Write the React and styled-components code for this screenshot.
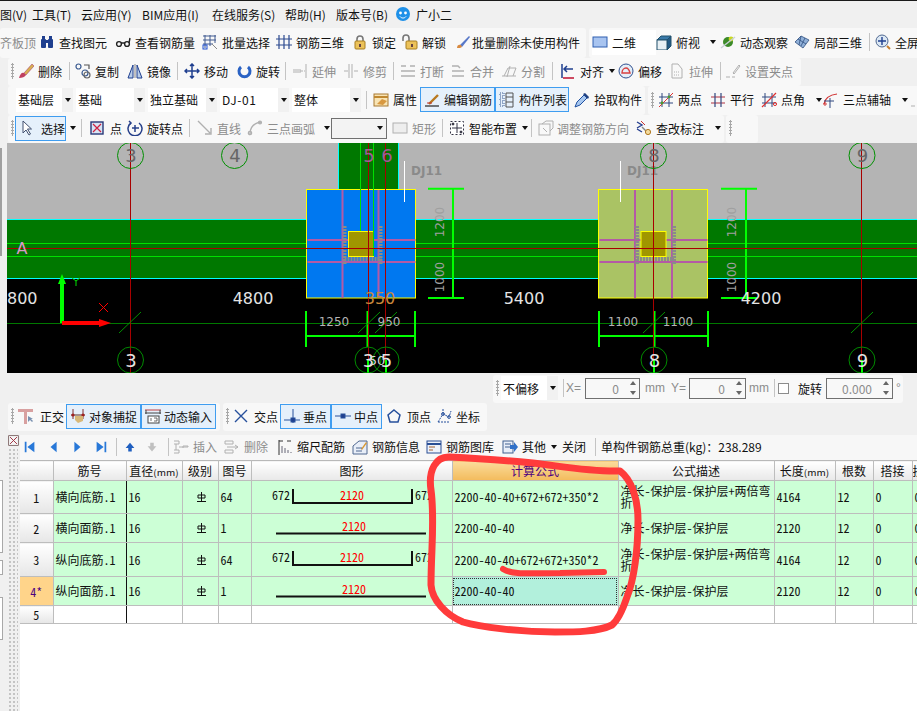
import React from 'react';
import styled, { createGlobalStyle } from 'styled-components';

const GlobalStyle = createGlobalStyle`
  html, body { margin: 0; padding: 0; background: #f0f0f0; overflow: hidden; }
  body { width: 917px; height: 711px; font: 12px "Noto Sans CJK SC", "Liberation Sans", sans-serif; color: #111; }
`;

const MONO = '"Noto Sans Mono CJK SC", "Liberation Mono", "Noto Sans CJK SC", monospace';

const navy = '#1f3f8f';
const mute = '#b0b0b0';
const icons = {
  find: <g fill={navy}><rect x="2" y="5" width="5" height="9" rx="1" /><rect x="9" y="5" width="5" height="9" rx="1" /><rect x="3" y="2" width="3" height="4" /><rect x="10" y="2" width="3" height="4" /><rect x="6" y="6" width="4" height="3" /></g>,
  glasses: <g fill="none" stroke="#222" strokeWidth="1.4"><circle cx="4" cy="10" r="2.4" /><circle cx="12" cy="10" r="2.4" /><path d="M6 9h4M14 9l1-5" /></g>,
  batch: <g fill="none" stroke="#405a90"><path d="M1 2h13M1 6h13M1 10h10M3 1v13M8 1v11M13 1v8" /><rect x="1" y="11" width="4" height="4" stroke="#2050d0" /><path d="M10 10l5 5" stroke="#888" /></g>,
  rebar: <g fill="none" stroke="#2c4a90" strokeWidth="1.2"><path d="M0 5h16M0 11h16M3 1v14M8 1v14M13 1v14" /></g>,
  lock: <g><path d="M5 8V5a3 3 0 0 1 6 0v3" fill="none" stroke="#777" strokeWidth="1.6" /><rect x="3" y="7" width="10" height="8" rx="1" fill="#ecc25a" stroke="#a87f20" /><rect x="7" y="10" width="2" height="3" fill="#644" /></g>,
  unlock: <g><path d="M1 7V4a3 3 0 0 1 6 0v3" fill="none" stroke="#777" strokeWidth="1.6" /><rect x="4" y="7" width="11" height="8" rx="1" fill="#ecc25a" stroke="#a87f20" /><rect x="9" y="10" width="2" height="3" fill="#644" /></g>,
  brush: <g><path d="M5 11L14 2l1 1-8 10z" fill="#5878c8" /><path d="M2 14c0-3 2-4 4-3l1 2c-1 1-3 1-5 1z" fill="#d88a40" /></g>,
  erase: <g><path d="M6 10L14 1l2 2-8 9z" fill="#d8b050" stroke="#805" strokeWidth=".4" /><path d="M1 15c1-4 3-6 5-5l2 2c-1 2-4 3-7 3z" fill="#c04060" /></g>,
  view2d: <rect x="1" y="3" width="14" height="10" fill="#a8c4f0" stroke="#2f5fb0" />,
  cube: <g stroke="#20506c" strokeWidth="1"><path d="M1 6l4-4h10l-4 4z" fill="#3878a8" /><path d="M11 6l4-4v10l-4 4z" fill="#245a84" /><rect x="1" y="6" width="10" height="10" fill="#e8f0f4" /></g>,
  orbit: <g><circle cx="8" cy="8" r="5" fill="#3c8a28" /><circle cx="11" cy="5" r="2.4" fill="#c8d820" /><path d="M1 14L15 3" stroke="#c8d0d8" strokeWidth="1.4" /></g>,
  local3d: <g fill="#90b0d8" stroke="#305080" strokeWidth=".8"><path d="M1 8l6-6 8 4-6 8z" /><path d="M4 5l8 5M7 2l-2 9M11 4l-4 8" fill="none" /></g>,
  fit: <g fill="none"><circle cx="7" cy="7" r="6" fill="#dce8f4" stroke="#506890" /><path d="M7 3v8M3 7h8" stroke="#1f3f8f" strokeWidth="1.4" /><path d="M12 12l3 3" stroke="#c88030" strokeWidth="2" /></g>,
  copy: <g fill="none" stroke="#3a5a90" strokeWidth="1.2"><circle cx="3.5" cy="3.5" r="2.5" /><circle cx="10" cy="10" r="3" /><circle cx="12" cy="12" r="3" stroke="#666" /><path d="M9 2h5v4" stroke="#555" /></g>,
  mirror: <g fill="#b8cce8" stroke={navy}><path d="M1 15L6 2v13zM15 15L10 2v13z" /><path d="M8 1v14" stroke="#888" /></g>,
  move: <g fill="none" stroke={navy} strokeWidth="1.5"><path d="M8 1v14M1 8h14M6 3l2-2 2 2M6 13l2 2 2-2M3 6L1 8l2 2M13 6l2 2-2 2" /></g>,
  rotate: <path d="M12 4a5.5 5.5 0 1 1-7 0" fill="none" stroke="#2a62c4" strokeWidth="3" />,
  extend: <g fill="none" stroke={mute}><path d="M14 1v14M1 7h8v2H1" /><path d="M10 8h3" strokeDasharray="1 1" /></g>,
  trim: <g fill="none" stroke={mute}><path d="M6 1v14M9 1v14M1 8h4M11 8h4" /></g>,
  breakI: <g fill="none" stroke={mute} strokeWidth="1.4"><path d="M1 3h5M10 3h5M1 8h14M1 13h14" /></g>,
  merge: <g fill="none" stroke={mute} strokeWidth="1.4"><path d="M2 3h6l2 2M2 8h12M2 13h12" /></g>,
  split: <g fill="none" stroke={mute}><path d="M1 13h14M3 13l4-8h8l-3 8M9 3l-3 11" /></g>,
  align: <g fill="none" strokeWidth="1.5"><path d="M2 1v14" stroke="#1f3f8f" /><path d="M3 15h11" stroke="#c01030" /><path d="M5 6h8M7 3L4 6l3 3" stroke="#1f3f8f" /></g>,
  offset: <g><circle cx="8" cy="8" r="7" fill="#e4eef8" stroke="#305090" /><path d="M4 10c0-3 2-5 4-5s3 1 4 5z" fill="none" stroke="#d84040" strokeWidth="1.4" /></g>,
  stretch: <g fill="none" stroke={mute}><path d="M3 15V1h6l4 5v9z" /><path d="M5 9h6M5 12h6" strokeDasharray="1 1" /></g>,
  grips: <g fill="none" stroke={mute}><path d="M1 14h4M7 14h3M8 10l6-8 1 1-6 8z" /></g>,
  attr: <g><rect x="1" y="2" width="14" height="12" fill="#f8e4b4" stroke="#a87830" /><path d="M1 5h14" stroke="#c08830" strokeWidth="2" /><path d="M4 12l5-5 5 2-4 4z" fill="#d89840" /></g>,
  edit: <g fill="none"><path d="M1 14h14" stroke="#222" strokeWidth="1.2" /><path d="M5 12L14 3" stroke="#b87820" strokeWidth="2.4" /><path d="M3 11h5" stroke="#c03030" /></g>,
  list: <g fill="none" stroke="#3a5a90"><rect x="1" y="1" width="4" height="3" strokeDasharray="1 1" /><rect x="1" y="6" width="4" height="3" strokeDasharray="1 1" /><rect x="1" y="11" width="4" height="3" strokeDasharray="1 1" /><path d="M7 1h7v14H7zM7 5h7M7 10h7" stroke="#555" /></g>,
  pick: <g><path d="M1 15l2-5 7-7 3 3-7 7z" fill="#a8c8f0" stroke="#2050a0" /><path d="M9 2l2-1 4 4-1 2z" fill="#204080" /></g>,
  twopt: <g stroke="#304880" fill="none"><path d="M4 1v14M11 1v14M1 5h14M1 11h14" /><path d="M1 15L15 1" stroke="#e03030" /><circle cx="4" cy="11" r="1.4" fill="#4a9a30" stroke="none" /><circle cx="11" cy="5" r="1.4" fill="#4a9a30" stroke="none" /></g>,
  parallel: <g fill="none" strokeWidth="1.2"><path d="M1 5h14M1 11h14" stroke="#b03040" /><path d="M5 1v14M11 1v14" stroke="#304880" /></g>,
  angle: <g fill="none" stroke="#304880"><path d="M4 1v14M11 1v14M1 5h14M1 11h14" /><path d="M1 15L15 1" stroke="#e03030" strokeWidth="1.2" /><circle cx="14" cy="12" r="1.6" stroke="#e03030" /></g>,
  arc3: <g fill="none"><path d="M1 12C2 6 6 3 14 2" stroke="#d03030" strokeWidth="1.2" /><path d="M7 6v10M1 9h10" stroke="#304880" /><circle cx="2" cy="12" r="1.2" stroke="#d03030" /></g>,
  cursor: <path d="M4 1v12l3-3 3 5 1.5-1-3-5h4z" fill="#fff" stroke="#405070" />,
  point: <g><rect x="2" y="2" width="12" height="12" fill="#d8e4f4" stroke="#283878" strokeWidth="1.4" /><path d="M4 4l8 8M12 4l-8 8" stroke="#d02040" strokeWidth="1.2" /></g>,
  rotpt: <g fill="none" stroke="#27408a" strokeWidth="1.5"><path d="M12 3a7 7 0 1 1-8 0" /><path d="M8 5v7M5 8h7" /><path d="M2 1l2 2-2 2" /></g>,
  line: <g stroke={mute} fill="none" strokeWidth="1.4"><path d="M1 1l12 12M14 8v6H8" /></g>,
  arc: <g fill="none" stroke={mute} strokeWidth="1.4"><path d="M3 14C3 7 7 3 14 2" /><circle cx="3" cy="13" r="1.6" /><circle cx="13" cy="2.5" r="1.4" /></g>,
  rect: <rect x="1" y="3" width="14" height="10" fill="#eee" stroke={mute} />,
  smart: <g stroke="#334"><rect x="1.5" y="1.5" width="13" height="13" fill="#fff" strokeDasharray="2 2" /><path d="M8 3v10M3 8h10" fill="none" /><circle cx="4" cy="4" r="1" fill="#222" /><circle cx="12" cy="12" r="1" fill="#222" /></g>,
  adjust: <g fill="none" stroke={mute}><rect x="1" y="4" width="11" height="11" /><path d="M4 4l4-3h7v7l-3 3M5 8l4 4" /></g>,
  mark: <g fill="none"><path d="M1 2l5 3-5 3M1 9l5 3" stroke="#274090" strokeWidth="1.4" /><path d="M6 7l5 5" stroke="#888" strokeWidth="1.4" /><circle cx="12" cy="12" r="2.6" fill="#f4dca0" stroke="#b07820" /><path d="M5 1l4 4" stroke="#c83030" /></g>,
  ortho: <g><path d="M0 1h15v3H9v12H6V4H0z" fill="#d8a0a0" /><path d="M10 8v6l2-2 2 2 1-1-2-2h2z" fill="#7890b0" /></g>,
  snap: <g><path d="M1 7h14" stroke="#603020" /><path d="M3 1v10M13 1v10" stroke="#803030" /><circle cx="3" cy="7" r="1.6" fill="#a02020" /><circle cx="13" cy="7" r="1.6" fill="#a02020" /><path d="M5 8h8v5l-5 2-3-3z" fill="#d8b878" /></g>,
  dyn: <g fill="none" stroke="#444"><path d="M0 2h16" stroke="#c04040" /><path d="M1 2v4M15 2v4M0 5h16" /><rect x="3" y="8" width="11" height="7" fill="#fff" /><path d="M6 10v3M9 10h3v3H9" strokeWidth=".8" /></g>,
  cross: <path d="M2 2l12 12M14 2L2 14" stroke="#27509c" strokeWidth="1.4" />,
  perp: <g fill="#1f3f8f" stroke="#27509c"><path d="M0 12h16M9 1v14" fill="none" /><rect x="7" y="10" width="4" height="4" /></g>,
  mid: <g fill="#1f3f8f" stroke="#27509c"><path d="M0 8h16" fill="none" /><rect x="6" y="6" width="4" height="4" /></g>,
  vertex: <path d="M8 2l6 5-2 7H4L2 7z" fill="none" stroke="#27509c" strokeWidth="1.5" />,
  coord: <g fill="none" stroke="#27509c"><path d="M2 14L7 6l6 3 2-6M7 6V1M2 14h12" strokeDasharray="2 1" /><circle cx="7" cy="6" r="1.4" /><circle cx="13" cy="9" r="1.4" /></g>,
  first: <g fill="#2878d8"><rect x="2" y="2" width="2" height="12" /><path d="M13 2v12L5 8z" /></g>,
  prev: <path d="M11 2v12L4 8z" fill="#2878d8" />,
  next: <path d="M5 2v12l7-6z" fill="#2878d8" />,
  last: <g fill="#2878d8"><rect x="12" y="2" width="2" height="12" /><path d="M3 2v12l8-6z" /></g>,
  up: <path d="M8 3l5 6h-3v4H6V9H3z" fill="#1f5fc0" />,
  down: <path d="M8 13l5-6h-3V3H6v4H3z" fill="#c0c0c0" />,
  insert: <g fill="none" stroke={mute}><path d="M1 2h5v3H1M1 11h5v3H1M6 8h9v-1h-5v2" /><path d="M3 5v6" /></g>,
  remove: <g fill="none" stroke={mute}><path d="M1 2h8v3H1zM1 11h8v3H1zM3 8h11" /><path d="M11 6l3 2-3 2" /></g>,
  scale: <g fill="none" stroke="#333"><path d="M2 1v15M2 2h4M10 2h4" /><path d="M5 14V7M8 14V9M11 14v-3M14 14v-1" stroke="#667" /></g>,
  info: <g><path d="M1 15V7l6-5 8 0v13z" fill="#e8eef8" stroke="#506890" /><path d="M9 10l5-7 1 1-5 7z" fill="#d89830" /><path d="M4 9h6M4 12h6" stroke="#506890" /></g>,
  lib: <g fill="none" stroke="#2a4f95"><rect x="1" y="2" width="14" height="12" fill="#eef2fa" /><path d="M1 5h14" strokeWidth="2" /><path d="M3 8h6M3 11h4" stroke="#a06030" /></g>,
  other: <g><rect x="1" y="2" width="10" height="12" fill="#e8eef8" stroke="#406090" /><path d="M3 5h6M3 8h6" stroke="#406090" /><path d="M8 6h4V3l4 5-4 5v-3H8z" fill="#3070c8" /></g>,
  close: <g fill="none" stroke="#5a3a3a"><rect x="1" y="1" width="14" height="14" fill="#f4f4f4" /><path d="M3 3l10 10M13 3L3 13" stroke="#a03040" strokeWidth="1.4" /></g>,
};

const IconBox = styled.svg`
  flex: none;
  width: ${(p) => p.$s || 16}px;
  height: ${(p) => p.$s || 16}px;
`;

const Icon = ({ name, size }) => (
  <IconBox viewBox="0 0 16 16" $s={size}>{icons[name]}</IconBox>
);

const MenuBar = styled.div`
  height: 27px;
  border-top: 1px solid #1a1a1a;
  display: flex;
  align-items: center;
  white-space: nowrap;
  font-size: 12px;
`;

const MenuItem = styled.span`
  flex: none;
  width: ${(p) => p.$w}px;
`;

const Mascot = styled.svg`
  flex: none;
  width: 14px;
  height: 15px;
  margin-right: 6px;
`;

const Row = styled.div`
  height: ${(p) => p.$h}px;
  padding-left: ${(p) => p.$left || 0}px;
  display: flex;
  align-items: stretch;
  white-space: nowrap;
  overflow: hidden;
`;

const Group = styled.div`
  flex: none;
  display: flex;
  align-items: center;
  background: #f8f8f8;
  border-radius: 3px;
  margin: 0 ${(p) => p.$mr || 0}px 0 0;
  padding: 0 ${(p) => p.$pr || 3}px 2px ${(p) => p.$pl || 0}px;
`;

const Grip = styled.span`
  flex: none;
  width: ${(p) => p.$w}px;
  height: 16px;
  background-image: radial-gradient(circle, #a8a8a8 1px, transparent 1.2px);
  background-size: 3px 3px;
  background-repeat: repeat-y;
  background-position: 3px 0;
`;

const Sep = styled.span`
  flex: none;
  width: ${(p) => p.$w}px;
  height: 18px;
  &::before {
    content: '';
    display: block;
    width: 1px;
    height: 100%;
    background: #c4c4c4;
  }
`;

const ToolItem = styled.span`
  flex: none;
  box-sizing: border-box;
  width: ${(p) => p.$w}px;
  height: 25px;
  display: flex;
  align-items: center;
  gap: ${(p) => p.$gap ?? 4}px;
  color: ${(p) => (p.$off ? '#8c8c8c' : '#111')};
  padding-left: ${(p) => (p.$active ? 3 : 0)}px;
  background: ${(p) => (p.$active ? '#e5f0fb' : p.$white ? '#fff' : 'transparent')};
  border: ${(p) => (p.$active ? '1px solid #3f9df0' : 'none')};
  overflow: hidden;
`;

const Caret = styled.span`
  flex: none;
  width: 0;
  height: 0;
  margin-left: ${(p) => p.$ml ?? 4}px;
  margin-right: ${(p) => p.$mr ?? 0}px;
  border: 3px solid transparent;
  border-top: 4px solid #111;
  border-bottom: none;
`;

const Tool = ({ w, icon, label, off, active, gap, caret, ml, white }) => (
  <ToolItem $w={w} $off={off} $active={active} $gap={gap} $white={white}>
    {icon && <Icon name={icon} />}
    {label}
    {caret && <Caret $ml={ml} />}
  </ToolItem>
);

const Combo = styled.span`
  flex: none;
  box-sizing: border-box;
  width: ${(p) => p.$w}px;
  height: 24px;
  margin-right: ${(p) => p.$mr ?? 3}px;
  padding-left: 2px;
  display: flex;
  align-items: center;
  justify-content: space-between;
  background: #fff;
  letter-spacing: ${(p) => (p.$wide ? 0.6 : 0)}px;
`;

const ComboArrow = styled.span`
  flex: none;
  align-self: stretch;
  width: 11px;
  background: #f1f1f1;
  display: flex;
  align-items: center;
  justify-content: center;
`;

const ComboBox = ({ w, text, mr, wide }) => (
  <Combo $w={w} $mr={mr} $wide={wide}>
    {text}
    <ComboArrow><Caret $ml={0} /></ComboArrow>
  </Combo>
);

const EmptySelect = styled.span`
  flex: none;
  box-sizing: border-box;
  width: 56px;
  height: 21px;
  margin-right: 5px;
  border: 1px solid #707070;
  background: #f3f3f3;
  display: flex;
  align-items: center;
  justify-content: flex-end;
  padding-right: 3px;
`;

const SpinBox = styled.span`
  flex: none;
  box-sizing: border-box;
  width: ${(p) => p.$w}px;
  height: 21px;
  border: 1px solid #707070;
  display: flex;
  align-items: center;
  justify-content: flex-end;
  color: #8c8c8c;
  font-size: 12px;
`;

const SpinArrows = styled.span`
  flex: none;
  width: 13px;
  margin-left: 7px;
  display: flex;
  flex-direction: column;
  gap: 6px;
  align-items: center;
`;

const Tri = styled.span`
  width: 0;
  height: 0;
  border: 3px solid transparent;
  border-bottom: 4px solid ${(p) => (p.$dn ? 'transparent' : '#666')};
  border-top: ${(p) => (p.$dn ? '4px solid #666' : 'none')};
  ${(p) => (p.$dn ? 'border-bottom: none;' : '')}
`;

const Spin = ({ w, value }) => (
  <SpinBox $w={w}>
    {value}
    <SpinArrows><Tri /><Tri $dn /></SpinArrows>
  </SpinBox>
);

const Label = styled.span`
  flex: none;
  box-sizing: border-box;
  width: ${(p) => p.$w}px;
  padding-left: ${(p) => p.$pl || 0}px;
  color: ${(p) => (p.$off ? '#8c8c8c' : '#111')};
  font-family: ${(p) => (p.$latin ? '"Liberation Sans", sans-serif' : 'inherit')};
`;

const CheckBoxMark = styled.span`
  flex: none;
  box-sizing: border-box;
  width: 11px;
  height: 11px;
  margin-right: 9px;
  border: 1px solid #8c8c8c;
  background: #fff;
`;

const CanvasRow = styled.div`
  height: 230px;
  margin-bottom: 2px;
  display: flex;
`;

const LeftEdge = styled.div`
  flex: none;
  width: 7px;
  height: 108px;
  margin-top: 5px;
  box-sizing: border-box;
  border-left: 2px solid #a0a0a0;
`;

const Canvas = styled.svg`
  flex: 1;
  display: block;
  height: 230px;
  min-width: 0;
  text {
    font-family: "DejaVu Sans", sans-serif;
  }
`;

const Lower = styled.div`
  display: flex;
  margin-top: 4px;
`;

const SideEdge = styled.div`
  flex: none;
  width: 3px;
  margin-right: 5px;
`;

const EdgeBox = styled.div`
  box-sizing: border-box;
  height: ${(p) => p.$h}px;
  margin-top: ${(p) => p.$mt}px;
  background: #fff;
  border: 1px solid #a8a8a8;
  border-left: none;
`;

const SideGrip = styled.div`
  flex: none;
  width: 12px;
  height: 276px;
  display: flex;
  flex-direction: column;
`;

const SideDots = styled.div`
  flex: 1;
  width: 10px;
  margin-top: 2px;
  background-image: radial-gradient(circle, #c4c4c4 1px, transparent 1.2px);
  background-size: 4px 4px;
`;

const Main = styled.div`
  flex: 1;
  min-width: 0;
  overflow: hidden;
  background: #fff;
`;

const TableBar = styled.div`
  box-sizing: border-box;
  height: 25px;
  background: #f7f7f7;
  display: flex;
  align-items: center;
  padding: 0 0 2px 3px;
  white-space: nowrap;
`;

const NavBtn = styled.span`
  flex: none;
  width: ${(p) => p.$w}px;
  display: flex;
`;

const Grid = styled.table`
  table-layout: fixed;
  border-collapse: collapse;
  width: 897px;
  font-size: 12px;
  border-top: 1px solid #b8b8b8;
`;

const Cell = styled.td`
  box-sizing: border-box;
  height: ${(p) => p.$h}px;
  padding: 0 0 0 2px;
  border: 1px solid #bdbdbd;
  border-top: none;
  border-left: none;
  background: ${(p) => (p.$empty ? '#fff' : '#ccffd6')};
  font-family: ${MONO};
  line-height: 12px;
  overflow: hidden;
  white-space: ${(p) => (p.$wrap ? 'normal' : 'nowrap')};
  text-align: ${(p) => (p.$center ? 'center' : 'left')};
  ${(p) => (p.$rule ? 'border-right: 1px solid #111;' : '')}
  ${(p) => (p.$sel ? 'background: #b2f0dc; outline: 1px dotted #333; outline-offset: -2px;' : '')}
`;

const HeadCell = styled.th`
  box-sizing: border-box;
  height: 20px;
  padding: 0;
  font-weight: 400;
  font-size: 12px;
  border-right: 1px solid #bdbdbd;
  border-bottom: 1px solid #bdbdbd;
  overflow: hidden;
  white-space: nowrap;
  color: ${(p) => (p.$hot ? '#4c0080' : '#111')};
  background: ${(p) =>
    p.$hot ? 'linear-gradient(#fbdc9c, #f3bb5c)' : 'linear-gradient(#fff, #e8e8e8)'};
`;

const Small = styled.span`
  font-size: 10px;
  transform: scaleY(0.9);
  display: inline-block;
`;

const RowHead = styled.td`
  box-sizing: border-box;
  padding: 0;
  text-align: center;
  border-right: 1px solid #bdbdbd;
  border-bottom: 1px solid #bdbdbd;
  font-family: ${MONO};
  color: ${(p) => (p.$hot ? '#4c0080' : '#111')};
  background: ${(p) => (p.$hot ? '#ffd48a' : 'linear-gradient(#fff, #e6e6e6)')};
`;

const Grade = styled.svg`
  display: block;
  margin: 0 auto;
  width: 9px;
  height: 10px;
`;

const ShapeBox = styled.svg`
  display: block;
  width: 201px;
  height: ${(p) => p.$h}px;
  text {
    font-family: ${MONO};
    font-size: 12px;
  }
`;

const ShapeCell = styled(Cell)`
  padding: 0;
`;

const Scribble = styled.svg`
  position: absolute;
  left: 0;
  top: 0;
  width: 917px;
  height: 711px;
  pointer-events: none;
`;

const GradeMark = () => (
  <Grade viewBox="0 0 9 10">
    <path d="M4.5 0v10M0 9.5h9M1 3h7v3H1z" fill="none" stroke="#111" />
  </Grade>
);

const RebarShape = ({ bent, h }) =>
  bent ? (
    <ShapeBox $h={h} viewBox={`0 0 201 ${h}`}>
      <text x="20" y="19" fill="#111">672</text>
      <path d="M41 8v14h119V8" fill="none" stroke="#111" strokeWidth="2" />
      <text x="100" y="19" textAnchor="middle" fill="#f00">2120</text>
      <text x="163" y="19" fill="#111">672</text>
    </ShapeBox>
  ) : (
    <ShapeBox $h={h} viewBox={`0 0 201 ${h}`}>
      <path d="M24 19.5h150" stroke="#111" strokeWidth="2" />
      <text x="102" y="17" textAnchor="middle" fill="#f00">2120</text>
    </ShapeBox>
  );

const GridCircle = ({ x, y, n, bottom }) => (
  <g>
    <circle cx={x} cy={y} r="13" fill="none" stroke={bottom ? '#008a00' : '#009000'} />
    <text x={x + 0.5} y={y + 6.5} textAnchor="middle" fontSize="18" fill={bottom ? '#e4e4e4' : '#666'}>{n}</text>
  </g>
);

const Footing = ({ x, fill, colX, vert1, vert2, stem, dj }) => (
  <g>
    <rect x={x} y="189.5" width="109" height="108.5" fill={fill} stroke="#ffff00" />
    <path d={`M${vert1} 190v108M${vert2} 190v108M${x + 1} 240h108M${x + 1} 262h108`} stroke="#b45aa5" strokeWidth="2" />
    <path d={`M${vert1 + 2} 226v39M${vert2 + 2} 226v39M${vert1 + 2} 259h37`} stroke="#8a8a8a" strokeWidth="4" strokeDasharray="2 1" />
    <rect x={colX} y="231.5" width="25" height="25" fill="#a09600" stroke="#ffff00" />
    <path d={`M${stem} 161v41`} stroke="#fff" />
    <text x={dj} y="175" fontSize="12" fontWeight="700" fill="#8a8a8a">DJ11</text>
  </g>
);

const HDim = ({ x1, x2, mid }) => (
  <path d={`M${x1} 336h${x2 - x1}M${x1} 311v36M${mid} 311v36M${x2} 311v36`} stroke="#00ff00" strokeWidth="2" fill="none" />
);

const VDim = ({ x, x1, x2 }) => (
  <path d={`M${x1} 188.7H${x2}M${x1} 298H${x2}M${x} 188v110`} stroke="#00ff00" strokeWidth="2" fill="none" />
);

const Dim = ({ x, y, t, rot }) => (
  <text x={x} y={y} fontSize="12" fill={rot ? '#a0a0a0' : '#b4b4b4'} textAnchor="middle"
    transform={rot ? `rotate(-90 ${x} ${y})` : undefined}>{t}</text>
);

const Slash = ({ x, y }) => <path d={`M${x} ${y}l22-21`} stroke="#009000" fill="none" />;

const DrawingCanvas = () => (
  <Canvas viewBox="7 143 910 230">
    <rect x="7" y="143" width="910" height="76" fill="#b4b4b4" />
    <rect x="7" y="219" width="910" height="59" fill="#007800" />
    <rect x="7" y="278" width="910" height="95" fill="#000" />
    <path d="M7 219.5h910M7 278.5h910" stroke="#00ffff" />
    <rect x="339" y="143" width="59" height="47" fill="#007800" />
    <path d="M338.5 143v47M398.5 143v47" stroke="#00ffff" />
    <path d="M7 243.5h910M7 256.5h910" stroke="#00e000" />
    <path d="M7 323.5h910" stroke="#007800" />
    <Footing x={306.5} fill="#0078f0" colX={348.5} vert1={342.5} vert2={378.5} stem={404.5} dj={411} />
    <Footing x={598.5} fill="#aac364" colX={641} vert1={635} vert2={672} stem={620.5} dj={627} />
    <path d="M360.5 143v88M373.5 143v113" stroke="#00e000" />
    <VDim x={453} x1={428} x2={464} />
    <VDim x={746} x1={721} x2={757} />
    <HDim x1={306} x2={415} mid={367.5} />
    <HDim x1={599} x2={708} mid={654.5} />
    <path d="M368 360v13M386 360v13M654 360v13M862 360v13" stroke="#00ff00" strokeWidth="2" />
    <path d="M130.5 143v230M368.5 143v217M385.5 143v217M653.5 143v217M861.5 143v217M7 248.5h910" stroke="#a80000" />
    <Slash x={119} y={333} /><Slash x={358} y={333} /><Slash x={375} y={333} />
    <Slash x={643} y={333} /><Slash x={851} y={333} />
    <GridCircle x={130.5} y={155.5} n="3" />
    <GridCircle x={234.5} y={155.5} n="4" />
    <text x={369} y={162} textAnchor="middle" fontSize="18" fill="#a05a9a">5</text>
    <text x={387} y={162} textAnchor="middle" fontSize="18" fill="#a05a9a">6</text>
    <GridCircle x={653.5} y={155.5} n="8" />
    <GridCircle x={862} y={155.5} n="9" />
    <GridCircle x={130.5} y={360} n="3" bottom />
    <GridCircle x={368} y={360} n="3" bottom />
    <GridCircle x={386} y={360} n="5" bottom />
    <text x={377} y={365} textAnchor="middle" fontSize="13" fill="#d8d8d8">50</text>
    <GridCircle x={654} y={360} n="8" bottom />
    <GridCircle x={862} y={360} n="9" bottom />
    <text x={22} y={254} textAnchor="middle" fontSize="16" fill="#d898c8">A</text>
    <text x={7} y={304} fontSize="16" fill="#e4e4e4">800</text>
    <text x={253} y={304} textAnchor="middle" fontSize="16" fill="#e4e4e4">4800</text>
    <text x={524} y={304} textAnchor="middle" fontSize="16" fill="#e4e4e4">5400</text>
    <text x={761} y={304} textAnchor="middle" fontSize="16" fill="#e4e4e4">4200</text>
    <text x={380} y={304} textAnchor="middle" fontSize="16" fill="#c8883c">350</text>
    <Dim x={334} y={326} t="1250" /><Dim x={389} y={326} t="950" />
    <Dim x={623} y={326} t="1100" /><Dim x={678} y={326} t="1100" />
    <Dim x={444} y={222} t="1200" rot /><Dim x={444} y={277} t="1000" rot />
    <Dim x={736} y={222} t="1200" rot /><Dim x={736} y={277} t="1000" rot />
    <path d="M62 323v-44" stroke="#00ff00" strokeWidth="4" />
    <path d="M62 274l4 10h-8z" fill="#00ff00" />
    <path d="M62 323h38" stroke="#ff0000" strokeWidth="4" />
    <path d="M111 323l-12-4v8z" fill="#ff0000" />
    <path d="M72 278l4 3 4-3M76 281v5" stroke="#00e000" fill="none" />
    <path d="M99 303l9 9M108 303l-9 9" stroke="#ff0000" fill="none" />
  </Canvas>
);

const LOOP = 'M450 457C470 458 500 460 533 463C560 466 590 472 620 471C632 480 638 500 638 520C638 550 634 580 627 597C622 612 618 620 612 625C598 632 575 632 555 632C520 632 480 627 463 622C446 615 432 600 431 585C431 550 435 520 431 490C428 470 436 456 450 457Z';

const rows = [
  { n: '1', name: '横向底筋.1', img: '64', bent: true, f: '2200-40-40+672+672+350*2', d: '净长-保护层-保护层+两倍弯折', len: '4164', h: 32 },
  { n: '2', name: '横向面筋.1', img: '1', f: '2200-40-40', d: '净长-保护层-保护层', len: '2120', h: 28 },
  { n: '3', name: '纵向底筋.1', img: '64', bent: true, f: '2200-40-40+672+672+350*2', d: '净长-保护层-保护层+两倍弯折', len: '4164', h: 33 },
  { n: '4*', name: '纵向面筋.1', img: '1', f: '2200-40-40', d: '净长-保护层-保护层', len: '2120', h: 28, hot: true },
];

const widths = [33, 73, 56, 36, 33, 201, 166, 156, 61, 38, 39, 5];

export default function App() {
  return (
    <>
      <GlobalStyle />
      <MenuBar>
        <MenuItem $w={32}>图(V)</MenuItem>
        <MenuItem $w={49}>工具(T)</MenuItem>
        <MenuItem $w={61}>云应用(Y)</MenuItem>
        <MenuItem $w={70}>BIM应用(I)</MenuItem>
        <MenuItem $w={73}>在线服务(S)</MenuItem>
        <MenuItem $w={51}>帮助(H)</MenuItem>
        <MenuItem $w={60}>版本号(B)</MenuItem>
        <Mascot viewBox="0 0 14 15">
          <circle cx="7" cy="7" r="7" fill="#1e90e8" />
          <circle cx="4.5" cy="6" r="1.4" fill="#fff" /><circle cx="9.5" cy="6" r="1.4" fill="#fff" />
          <path d="M4 9.5c1.5 2 4.5 2 6 0" stroke="#fff" fill="none" />
        </Mascot>
        广小二
      </MenuBar>

      <Row $h={30}>
        <Group $pr={3} $mr={3}>
          <Tool w={39} label="齐板顶" off />
          <Tool w={76} icon="find" label="查找图元" />
          <Tool w={87} icon="glasses" label="查看钢筋量" />
          <Tool w={74} icon="batch" label="批量选择" />
          <Tool w={76} icon="rebar" label="钢筋三维" />
          <Tool w={50} icon="lock" label="锁定" />
          <Tool w={53} icon="unlock" label="解锁" />
          <Tool w={128} icon="brush" label="批量删除未使用构件" gap={1} />
        </Group>
        <Group $pl={3}>
          <Tool w={64} icon="view2d" label="二维" caret ml={17} white />
          <Tool w={64} icon="cube" label="俯视" caret ml={6} />
          <Tool w={74} icon="orbit" label="动态观察" />
          <Tool w={75} icon="local3d" label="局部三维" />
          <Sep $w={6} />
          <Tool w={60} icon="fit" label="全屏" />
        </Group>
      </Row>

      <Row $h={28} $left={8}>
        <Group>
          <Grip $w={10} />
          <Tool w={51} icon="erase" label="删除" />
          <Sep $w={6} />
          <Tool w={52} icon="copy" label="复制" />
          <Tool w={50} icon="mirror" label="镜像" />
          <Sep $w={7} />
          <Tool w={52} icon="move" label="移动" />
          <Tool w={49} icon="rotate" label="旋转" />
          <Sep $w={7} />
          <Tool w={51} icon="extend" label="延伸" off />
          <Tool w={50} icon="trim" label="修剪" off />
          <Sep $w={7} />
          <Tool w={50} icon="breakI" label="打断" off />
          <Tool w={51} icon="merge" label="合并" off />
          <Tool w={51} icon="split" label="分割" off />
          <Sep $w={8} />
          <Tool w={58} icon="align" label="对齐" caret ml={1} />
          <Tool w={51} icon="offset" label="偏移" />
          <Tool w={51} icon="stretch" label="拉伸" off />
          <Sep $w={5} />
          <Tool w={73} icon="grips" label="设置夹点" off />
        </Group>
      </Row>

      <Row $h={29} $left={8}>
        <Group $pl={8} $mr={3}>
          <ComboBox w={57} text="基础层" />
          <ComboBox w={69} text="基础" />
          <ComboBox w={69} text="独立基础" />
          <ComboBox w={69} text="DJ-01" wide />
          <ComboBox w={69} text="整体" mr={5} />
          <Sep $w={7} />
          <Tool w={47} icon="attr" label="属性" />
          <Tool w={75} icon="edit" label="编辑钢筋" active />
          <Tool w={74} icon="list" label="构件列表" active />
          <Tool w={5} />
          <Tool w={68} icon="pick" label="拾取构件" />
        </Group>
        <Group>
          <Grip $w={10} />
          <Tool w={52} icon="twopt" label="两点" />
          <Tool w={51} icon="parallel" label="平行" />
          <Tool w={62} icon="angle" label="点角" caret ml={7} />
          <Tool w={87} icon="arc3" label="三点辅轴" caret ml={7} />
          <Tool w={10} icon="grips" />
        </Group>
      </Row>

      <Row $h={28} $left={8}>
        <Group $mr={2}>
          <Grip $w={7} />
          <Tool w={51} icon="cursor" label="选择" gap={6} active />
          <Caret $ml={4} $mr={5} />
          <Sep $w={8} />
          <Tool w={38} icon="point" label="点" gap={5} />
          <Tool w={62} icon="rotpt" label="旋转点" />
          <Sep $w={8} />
          <Tool w={50} icon="line" label="直线" off />
          <Tool w={84} icon="arc" label="三点画弧" off caret ml={5} />
          <EmptySelect><Caret $ml={0} /></EmptySelect>
          <Tool w={50} icon="rect" label="矩形" off />
          <Sep $w={7} />
          <Tool w={82} icon="smart" label="智能布置" caret ml={1} />
          <Sep $w={7} />
          <Tool w={98} icon="adjust" label="调整钢筋方向" off gap={3} />
          <Tool w={85} icon="mark" label="查改标注" caret ml={7} />
        </Group>
        <Group $pr={22}>
          <Grip $w={10} />
        </Group>
      </Row>

      <CanvasRow>
        <LeftEdge />
        <DrawingCanvas />
      </CanvasRow>

      <Row $h={28} $left={493}>
        <Group $pr={3}>
          <Grip $w={8} />
          <ComboBox w={57} text="不偏移" mr={5} />
          <Sep $w={3} />
          <Label $w={19} $off $latin>X=</Label>
          <Spin w={55} value="0" />
          <Label $w={31} $pl={5} $off $latin>mm</Label>
          <Label $w={18} $off $latin>Y=</Label>
          <Spin w={57} value="0" />
          <Label $w={28} $pl={3} $off $latin>mm</Label>
          <Sep $w={4} />
          <CheckBoxMark />
          <Label $w={28}>旋转</Label>
          <Spin w={67} value="0.000" />
          <Label $w={7} $pl={3} $off $latin>°</Label>
        </Group>
      </Row>

      <Row $h={28} $left={8}>
        <Group $mr={3} $pr={4}>
          <Grip $w={10} />
          <Tool w={48} icon="ortho" label="正交" gap={6} />
          <Tool w={75} icon="snap" label="对象捕捉" active gap={3} />
          <Tool w={75} icon="dyn" label="动态输入" active gap={3} />
        </Group>
        <Group>
          <Grip $w={10} />
          <Tool w={47} icon="cross" label="交点" gap={5} />
          <Tool w={51} icon="perp" label="垂点" active gap={3} />
          <Tool w={51} icon="mid" label="中点" active gap={3} />
          <Tool w={4} />
          <Tool w={50} icon="vertex" label="顶点" gap={5} />
          <Tool w={48} icon="coord" label="坐标" />
        </Group>
      </Row>

      <Lower>
        <SideEdge>
          <EdgeBox $mt={45} $h={73} />
          <EdgeBox $mt={7} $h={15} />
          <EdgeBox $mt={22} $h={43} />
        </SideEdge>
        <SideGrip>
          <Icon name="close" size={11} />
          <SideDots />
        </SideGrip>
        <Main>
          <TableBar>
            <NavBtn $w={24}><Icon name="first" size={14} /></NavBtn>
            <NavBtn $w={23}><Icon name="prev" size={14} /></NavBtn>
            <NavBtn $w={24}><Icon name="next" size={14} /></NavBtn>
            <NavBtn $w={22}><Icon name="last" size={14} /></NavBtn>
            <Sep $w={7} />
            <NavBtn $w={22}><Icon name="up" size={14} /></NavBtn>
            <NavBtn $w={23}><Icon name="down" size={14} /></NavBtn>
            <Sep $w={5} />
            <Tool w={51} icon="insert" label="插入" off />
            <Tool w={53} icon="remove" label="删除" off />
            <Tool w={75} icon="scale" label="缩尺配筋" />
            <Tool w={74} icon="info" label="钢筋信息" />
            <Tool w={76} icon="lib" label="钢筋图库" />
            <Tool w={60} icon="other" label="其他" caret ml={1} />
            <Tool w={33} label="关闭" />
            <Sep $w={6} />
            单构件钢筋总重(kg)：238.289
          </TableBar>
          <Grid>
            <colgroup>
              {widths.map((w, i) => <col key={i} width={w} />)}
            </colgroup>
            <thead>
              <tr>
                <HeadCell />
                <HeadCell>筋号</HeadCell>
                <HeadCell>直径<Small>(mm)</Small></HeadCell>
                <HeadCell>级别</HeadCell>
                <HeadCell>图号</HeadCell>
                <HeadCell>图形</HeadCell>
                <HeadCell $hot>计算公式</HeadCell>
                <HeadCell>公式描述</HeadCell>
                <HeadCell>长度<Small>(mm)</Small></HeadCell>
                <HeadCell>根数</HeadCell>
                <HeadCell>搭接</HeadCell>
                <HeadCell>损</HeadCell>
              </tr>
            </thead>
            <tbody>
              {rows.map((r) => (
                <tr key={r.n}>
                  <RowHead $hot={r.hot}>{r.n}</RowHead>
                  <Cell $h={r.h} $rule>{r.name}</Cell>
                  <Cell $h={r.h}>16</Cell>
                  <Cell $h={r.h} $center><GradeMark /></Cell>
                  <Cell $h={r.h}>{r.img}</Cell>
                  <ShapeCell $h={r.h}><RebarShape bent={r.bent} h={r.h} /></ShapeCell>
                  <Cell $h={r.h} $sel={r.hot}>{r.f}</Cell>
                  <Cell $h={r.h} $wrap>{r.d}</Cell>
                  <Cell $h={r.h}>{r.len}</Cell>
                  <Cell $h={r.h}>12</Cell>
                  <Cell $h={r.h}>0</Cell>
                  <Cell $h={r.h}>0</Cell>
                </tr>
              ))}
              <tr>
                <RowHead>5</RowHead>
                <Cell $h={18} $empty $rule />
                {widths.slice(2).map((w, i) => <Cell key={i} $h={18} $empty />)}
              </tr>
            </tbody>
          </Grid>
        </Main>
      </Lower>

      <Scribble viewBox="0 0 917 711">
        <path d={LOOP} fill="none" stroke="#ff3b3b" strokeWidth="7" strokeLinejoin="round" />
        <path d="M503 569C512 575 530 573 560 573L604 572" fill="none" stroke="#ff3b3b" strokeWidth="6" strokeLinecap="round" />
      </Scribble>
    </>
  );
}
